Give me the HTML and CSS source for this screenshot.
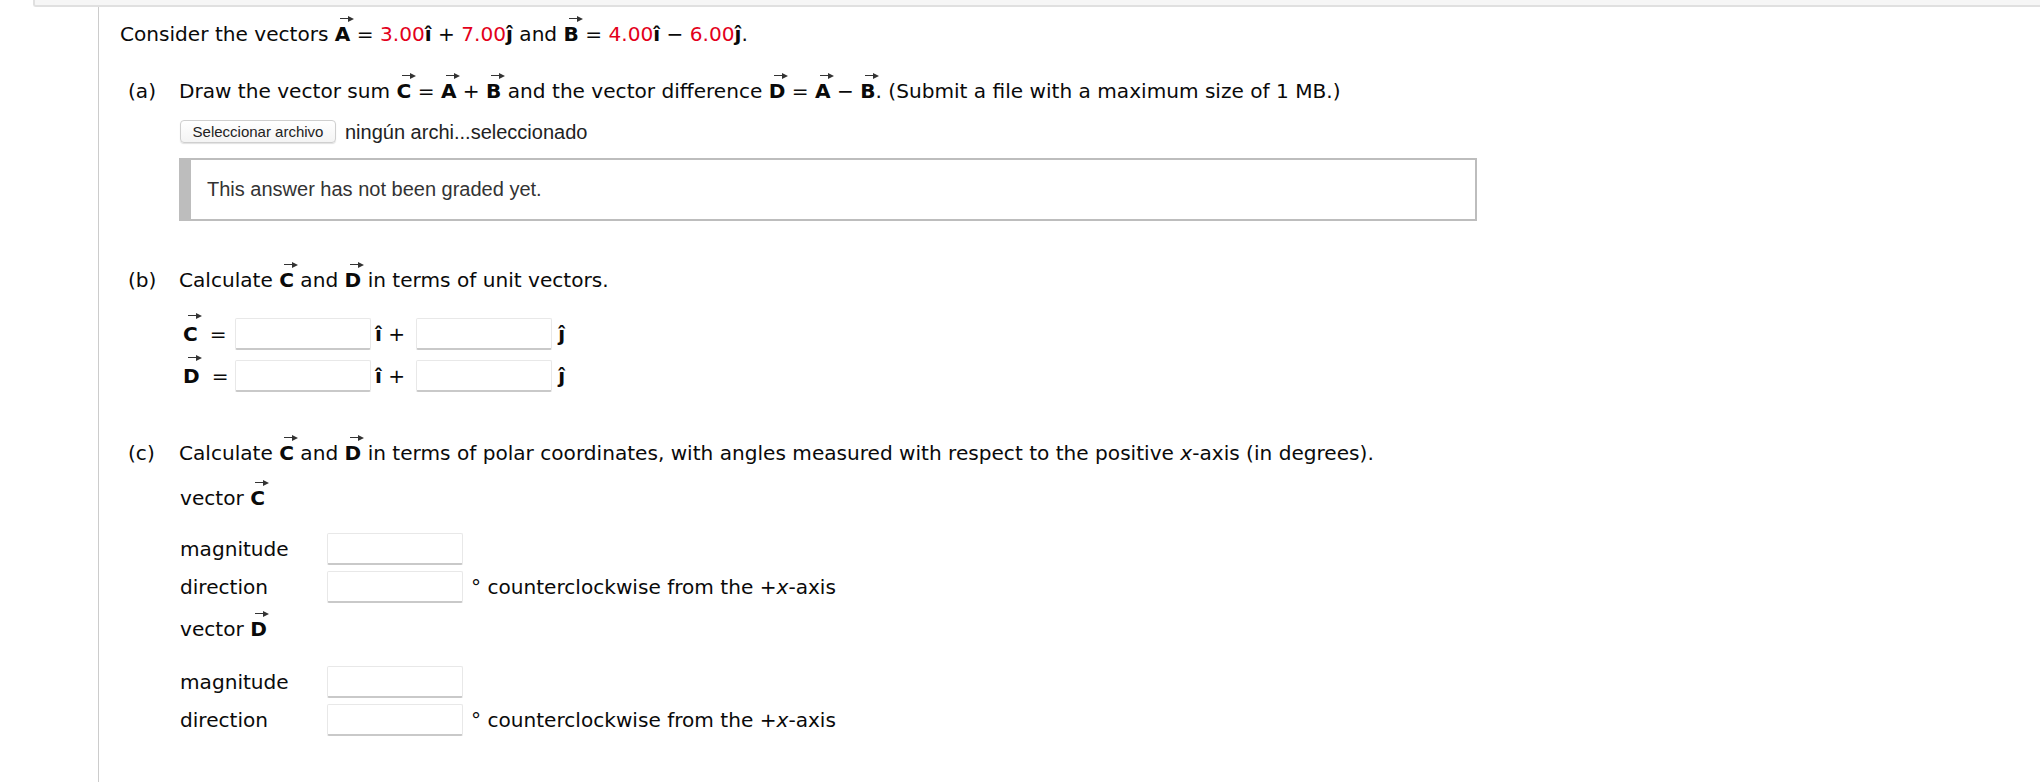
FILE: index.html
```html
<!DOCTYPE html>
<html lang="en">
<head>
<meta charset="utf-8">
<title>Vectors question</title>
<link rel="stylesheet" href="styles.css">
</head>
<body>
<div class="topbar"></div>
<div class="main">
  <p class="intro">Consider the vectors <b class="vec">A</b> = <span class="red">3.00</span><b>î</b> + <span class="red">7.00</span><b>ĵ</b> and <b class="vec">B</b> = <span class="red">4.00</span><b>î</b> − <span class="red">6.00</span><b>ĵ</b>.</p>

  <section class="part part-a">
    <div class="part-head"><span class="lbl">(a)</span><span class="q">Draw the vector sum <b class="vec">C</b> = <b class="vec">A</b> + <b class="vec">B</b> and the vector difference <b class="vec">D</b> = <b class="vec">A</b> − <b class="vec">B</b>. (Submit a file with a maximum size of 1 MB.)</span></div>
    <div class="part-body">
      <div class="file-row"><span class="file-btn">Seleccionar archivo</span><span class="file-name">ningún archi...seleccionado</span></div>
      <div class="grade-box">This answer has not been graded yet.</div>
    </div>
  </section>

  <section class="part part-b">
    <div class="part-head"><span class="lbl">(b)</span><span class="q">Calculate <b class="vec">C</b> and <b class="vec">D</b> in terms of unit vectors.</span></div>
    <div class="part-body">
      <div class="uv-row"><span class="uv-lab"><b class="vec">C</b><span class="eq">=</span></span><span class="field"></span><span class="unit"><b>î</b> +</span><span class="field"></span><span class="unit-j"><b>ĵ</b></span></div>
      <div class="uv-row"><span class="uv-lab"><b class="vec">D</b><span class="eq">=</span></span><span class="field"></span><span class="unit"><b>î</b> +</span><span class="field"></span><span class="unit-j"><b>ĵ</b></span></div>
    </div>
  </section>

  <section class="part part-c">
    <div class="part-head"><span class="lbl">(c)</span><span class="q">Calculate <b class="vec">C</b> and <b class="vec">D</b> in terms of polar coordinates, with angles measured with respect to the positive <i>x</i>-axis (in degrees).</span></div>
    <div class="part-body">
      <div class="vec-title">vector <b class="vec">C</b></div>
      <div class="polar">
        <span class="plab">magnitude</span><span class="field"></span><span></span>
        <span class="plab">direction</span><span class="field"></span><span class="deg">° counterclockwise from the +<i>x</i>-axis</span>
      </div>
      <div class="vec-title vec-title-d">vector <b class="vec">D</b></div>
      <div class="polar polar-d">
        <span class="plab">magnitude</span><span class="field"></span><span></span>
        <span class="plab">direction</span><span class="field"></span><span class="deg">° counterclockwise from the +<i>x</i>-axis</span>
      </div>
    </div>
  </section>
</div>
</body>
</html>
```

FILE: styles.css
```css
html, body {
  margin: 0;
  padding: 0;
  background: #fff;
}

body {
  font-family: "DejaVu Sans", Verdana, sans-serif;
  font-size: 20.1px;
  line-height: 30px;
  color: #0a0a0a;
  overflow: hidden;
}

.topbar {
  margin-left: 33px;
  height: 5px;
  background: #f6f6f6;
  border-left: 2px solid #e0e0e0;
  border-bottom: 2px solid #e0e0e0;
  border-bottom-left-radius: 3px;
}

.main {
  margin-left: 98px;
  border-left: 1px solid #cccccc;
  padding: 12px 0 0 21px;
  min-height: calc(100vh - 7px);
  box-sizing: border-box;
}

.intro {
  margin: 0;
}

.red {
  color: #e3001b;
}

b {
  font-weight: bold;
}

/* vector arrow drawn over the bold letter */
.vec {
  position: relative;
}

.vec::before {
  content: "";
  position: absolute;
  left: 5px;
  top: -4px;
  width: 10px;
  height: 1px;
  background: #333;
}

.vec::after {
  content: "";
  position: absolute;
  left: 13px;
  top: -6px;
  width: 0;
  height: 0;
  border-left: 6px solid #333;
  border-top: 3px solid transparent;
  border-bottom: 3px solid transparent;
}

.part {
  padding-left: 8px;
}

.part-head {
  display: flex;
}

.lbl {
  width: 51px;
  flex: none;
}

.part-body {
  margin-left: 51px;
}

.part-a {
  margin-top: 27px;
}

.part-b {
  margin-top: 44px;
}

.part-c {
  margin-top: 46px;
}

/* file input */
.file-row {
  display: flex;
  align-items: center;
  margin-top: 14px;
  margin-left: 1px;
  height: 23px;
}

.file-btn {
  box-sizing: border-box;
  width: 156px;
  height: 23px;
  border: 1px solid #cfcfcf;
  border-radius: 4px;
  background: linear-gradient(#ffffff, #f4f4f4);
  box-shadow: 0 1px 1px rgba(0, 0, 0, 0.12);
  font-family: "Liberation Sans", Arial, sans-serif;
  font-size: 15px;
  line-height: 21px;
  text-align: center;
  color: #222;
}

.file-name {
  margin-left: 9px;
  font-family: "Liberation Sans", Arial, sans-serif;
  font-size: 20px;
  color: #222;
}

.grade-box {
  margin-top: 15px;
  box-sizing: border-box;
  width: 1298px;
  height: 63px;
  border: 2px solid #bdbdbd;
  border-left: 12px solid #bdbdbd;
  padding: 14px 0 0 16px;
  font-family: "Liberation Sans", Arial, sans-serif;
  font-size: 20px;
  line-height: 30px;
  color: #333;
}

/* unit vector rows */
.uv-row {
  display: flex;
  align-items: center;
  height: 32px;
  padding-left: 4px;
  margin-top: 10px;
}

.part-b .uv-row:first-child {
  margin-top: 23px;
}

.uv-lab {
  display: flex;
  align-items: center;
  width: 52px;
  flex: none;
}

.eq {
  margin-left: 12px;
}

.field {
  display: inline-block;
  box-sizing: border-box;
  width: 136px;
  height: 32px;
  background: #fff;
  border: 1px solid #e8e8e8;
  border-bottom: 2px solid #c9c9c9;
  border-radius: 2px;
  flex: none;
}

.unit {
  margin-left: 4px;
  margin-right: 11px;
  white-space: pre;
}

.unit-j {
  margin-left: 6px;
}

/* polar */
.vec-title {
  margin-top: 15px;
  padding-left: 1px;
}

.vec-title-d {
  margin-top: 11px;
}

.polar {
  display: grid;
  grid-template-columns: 147px 136px auto;
  row-gap: 6px;
  align-items: center;
  margin-top: 20px;
  padding-left: 1px;
}

.polar-d {
  margin-top: 22px;
}

.deg {
  margin-left: 8px;
}
```
